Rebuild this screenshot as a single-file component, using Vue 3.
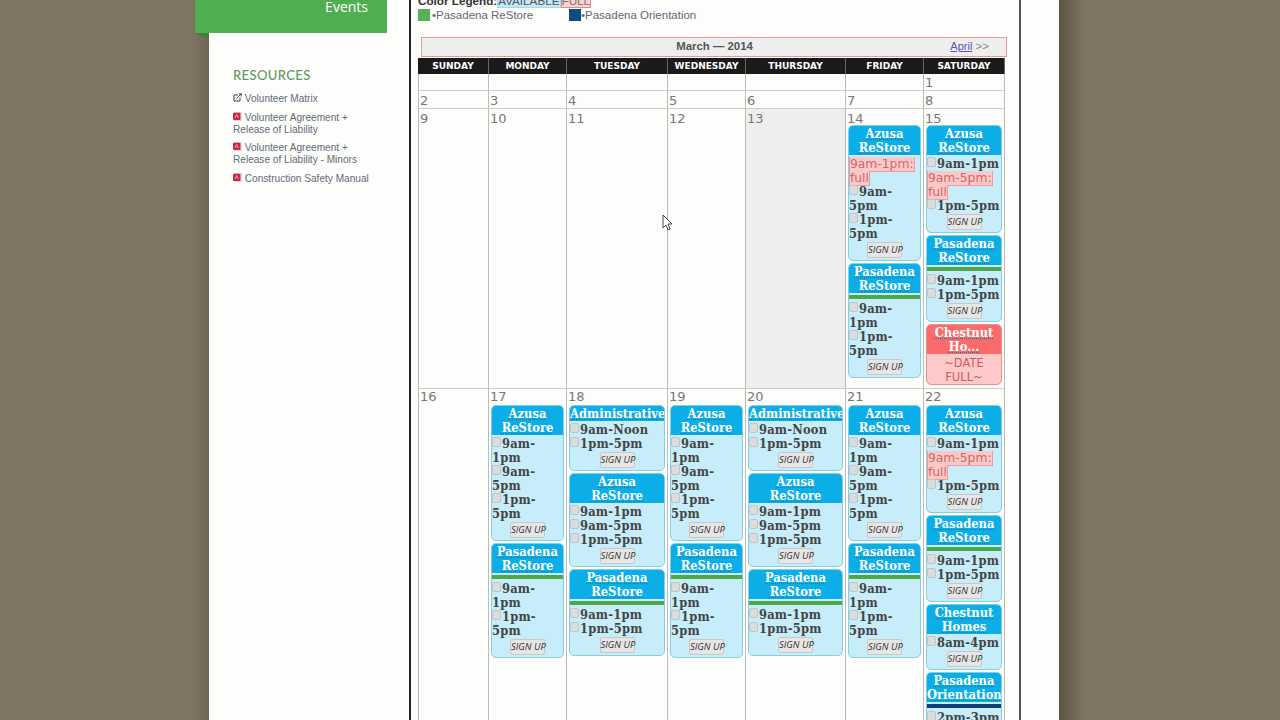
<script setup>
const links = [
  { text: 'Volunteer Matrix', icon: 'ext' },
  { text: 'Volunteer Agreement + Release of Liability', icon: 'pdf' },
  { text: 'Volunteer Agreement + Release of Liability - Minors', icon: 'pdf' },
  { text: 'Construction Safety Manual', icon: 'pdf' },
]
const days = ['SUNDAY', 'MONDAY', 'TUESDAY', 'WEDNESDAY', 'THURSDAY', 'FRIDAY', 'SATURDAY']

const t3 = ['9am-1pm', '9am-5pm', '1pm-5pm']
const t2 = ['9am-1pm', '1pm-5pm']
const azusa = { title: 'Azusa ReStore', times: t3 }
const pasadena = { title: 'Pasadena ReStore', times: t2, bar: 'green' }
const admin = { title: 'Administrative', times: ['9am-Noon', '1pm-5pm'] }
const weekday = [admin, azusa, pasadena]
const plain = [azusa, pasadena]

const rows = [
  { cls: 'short', cells: [{}, {}, {}, {}, {}, {}, { n: 1 }] },
  { cls: 'short2', cells: [{ n: 2 }, { n: 3 }, { n: 4 }, { n: 5 }, { n: 6 }, { n: 7 }, { n: 8 }] },
  {
    cls: 'tall',
    cells: [
      { n: 9 }, { n: 10 }, { n: 11 }, { n: 12 }, { n: 13, gray: true },
      {
        n: 14,
        cards: [
          { title: 'Azusa ReStore', times: [{ full: '9am-1pm: full' }, '9am-5pm', '1pm-5pm'] },
          pasadena,
        ],
      },
      {
        n: 15,
        cards: [
          { title: 'Azusa ReStore', times: ['9am-1pm', { full: '9am-5pm: full' }, '1pm-5pm'] },
          pasadena,
          { title: 'Chestnut Ho...', dateFull: true },
        ],
      },
    ],
  },
  {
    cls: 'last',
    cells: [
      { n: 16 },
      { n: 17, cards: plain },
      { n: 18, cards: weekday },
      { n: 19, cards: plain },
      { n: 20, cards: weekday },
      { n: 21, cards: plain },
      {
        n: 22,
        cards: [
          { title: 'Azusa ReStore', times: ['9am-1pm', { full: '9am-5pm: full' }, '1pm-5pm'] },
          pasadena,
          { title: 'Chestnut Homes', times: ['8am-4pm'] },
          { title: 'Pasadena Orientation', times: ['2pm-3pm'], bar: 'navy' },
        ],
      },
    ],
  },
]
</script>

<template>
  <div class="screen">
    <div class="page">
      <aside class="side">
        <div class="tab">Events</div>
        <h3 class="res">RESOURCES</h3>
        <ul class="links">
          <li v-for="l in links" :key="l.text">
            <svg v-if="l.icon === 'ext'" class="ico" viewBox="0 0 9 9" width="9" height="9">
              <path d="M5 2H1v6h6V4.5" fill="none" stroke="#444" stroke-width="1" />
              <path d="M3.5 5.5 8 1M5.5 .8H8.3V3.6" fill="none" stroke="#444" stroke-width="1" />
            </svg>
            <svg v-else class="ico" viewBox="0 0 9 9" width="9" height="9">
              <rect x="1.5" y="0.5" width="7.5" height="8" fill="#f3e4e6" stroke="#ccb" stroke-width=".6" />
              <rect x="0" y="0.7" width="7.5" height="7.3" rx="1" fill="#c8264a" />
              <path d="M2 6 3.7 2.5 5.4 6" fill="none" stroke="#f6c6d0" stroke-width=".8" />
            </svg>
            {{ l.text }}
          </li>
        </ul>
      </aside>

      <main class="main">
        <div class="legend1">
          <b>Color Legend:</b><span class="av">AVAILABLE</span><span class="fu">FULL</span>
        </div>
        <div class="legend2">
          <i class="sq green"></i><span class="lg-a">•Pasadena ReStore</span>
          <i class="sq navy"></i><span>•Pasadena Orientation</span>
        </div>

        <div class="month">
          <span class="m-title">March — 2014</span>
          <span class="m-next"><a class="m-link">April</a> &gt;&gt;</span>
        </div>

        <div class="cal">
          <div v-for="d in days" :key="d" class="dow">{{ d }}</div>
          <template v-for="(r, ri) in rows" :key="ri">
            <div
              v-for="(c, ci) in r.cells"
              :key="ci"
              class="cell"
              :class="[r.cls, { gray: c.gray, first: ci === 0 }]"
            >
              <div class="num">{{ c.n }}</div>
              <div
                v-for="(card, k) in c.cards || []"
                :key="k"
                class="card"
                :class="{ red: card.dateFull }"
              >
                <div class="head">
                  <div v-for="w in card.title.split(' ')" :key="w"><span class="ttl">{{ w }}</span></div>
                </div>
                <div v-if="card.bar" class="bar" :class="card.bar"></div>
                <div v-if="card.dateFull" class="datefull">~DATE FULL~</div>
                <template v-else>
                  <div class="times">
                    <div v-for="(t, i) in card.times" :key="i" class="time">
                      <span v-if="t.full" class="full">{{ t.full }}</span>
                      <template v-else><i class="cb"></i>{{ t }}</template>
                    </div>
                  </div>
                  <button class="sign">SIGN UP</button>
                </template>
              </div>
            </div>
          </template>
        </div>
      </main>
    </div>

    <svg class="cursor" viewBox="0 0 12 17" width="12" height="17">
      <path d="M1 1v13l3-3 2 5 2-1-2-5h4z" fill="#fff" stroke="#444" stroke-width="1" />
    </svg>
  </div>
</template>

<style>
html, body { margin: 0; padding: 0; background: #7f7564; }
</style>

<style scoped>
.screen {
  position: relative;
  width: 1280px;
  height: 720px;
  overflow: hidden;
  background: linear-gradient(90deg, #7f7564 0, #7f7564 190px, #6f6656 209px, #5c5546 1059px, #7f7564 1085px, #7f7564 100%);
}
.page {
  margin-left: 209px;
  width: 850px;
  height: 720px;
  background: #fdfdfb;
  display: flex;
  font-family: "Liberation Sans", Arial, sans-serif;
}
.side { width: 200px; flex: none; }
.tab {
  position: relative;
  margin-left: -14px;
  width: 192px;
  height: 33px;
  box-sizing: border-box;
  background: #4fae4f;
  color: #fff;
  font: 14px/14px "Open Sans", sans-serif;
  text-align: right;
  padding-right: 19px;
}
.tab::after {
  content: "";
  position: absolute;
  left: 0;
  top: 33px;
  border-top: 6px solid #3f7f3a;
  border-left: 14px solid transparent;
}
.res {
  margin: 34px 0 0 24px;
  font: 500 13px/16px Lato, sans-serif;
  letter-spacing: .4px;
  color: #5e9a5e;
}
.links {
  list-style: none;
  margin: 10px 0 0 24px;
  padding: 0;
  width: 145px;
  font-size: 10.1px;
  line-height: 12px;
  color: #5f6b78;
}
.links li { margin-bottom: 6.7px; }
.ico { vertical-align: top; margin-top: 0; }

.main {
  width: 612px;
  flex: none;
  box-sizing: border-box;
  border-left: 2px solid #222;
  border-right: 2px solid #555;
  padding-left: 7px;
  overflow: hidden;
}
.legend1 {
  margin-top: -5px;
  height: 12px;
  font-size: 11.7px;
  line-height: 12px;
  color: #333;
}
.av { background: #c5e8f7; border: 1px solid #a9d6ea; color: #555; }
.fu { background: #fbd0d0; border: 1px solid #e08a8a; color: #777; }
.legend2 {
  margin-top: 1px;
  height: 13px;
  display: flex;
  align-items: center;
  font-size: 11.5px;
  color: #667;
}
.sq { width: 12px; height: 12px; flex: none; margin-right: 2px; }
.sq.green { background: #58b158; }
.sq.navy { background: #0f4a80; margin-right: 0; }
.lg-a { width: 137px; }

.month {
  margin: 16px 0 0 3px;
  width: 586px;
  height: 20px;
  box-sizing: border-box;
  border: 1px solid #e09a9a;
  background: #eeeeee;
  position: relative;
  text-align: center;
  font-size: 11.4px;
  line-height: 16px;
  font-weight: bold;
  color: #555;
  display: flex;
  justify-content: center;
}
.m-title { margin-left: 1px; }
.m-next {
  position: absolute;
  right: 17px;
  top: 0;
  font-weight: normal;
  font-size: 11.5px;
  color: #888;
}
.m-link { color: #5a55b5; text-decoration: underline; font-size: 11px; }

.cal {
  display: grid;
  grid-template-columns: 71px 78px 101px 78px 100px 78px 81px;
  grid-template-rows: 16px 17px 18px 280px 400px;
  margin-top: 1px;
  width: 587px;
}
.dow {
  background: #1a1a1a;
  color: #fff;
  font: bold 9px/16px "DejaVu Sans", sans-serif;
  text-align: center;
  border-right: 1px solid #666;
}
.cell {
  border-right: 1px solid #bbb;
  border-bottom: 1px solid #ccc;
  padding: 0 2px;
  min-width: 0;
  box-sizing: border-box;
}
.cell.first { border-left: 1px solid #bbb; }
.cell.gray { background: #eeeeee; }
.num {
  font: 13px/16px "DejaVu Sans", sans-serif;
  color: #777;
  height: 16px;
  margin: 0 -1px;
}
.short .num { margin-top: 1px; }
.short2 .num { margin-top: 2px; }
.tall .num { line-height: 19px; }

.card {
  box-sizing: border-box;
  border: 1px solid #84cfe6;
  border-radius: 5px;
  background: #c6edf9;
  margin-bottom: 2px;
  overflow: hidden;
  font-family: "DejaVu Serif Condensed", "DejaVu Serif", serif;
  font-weight: bold;
  font-size: 12.8px;
  letter-spacing: .2px;
  line-height: 14px;
  color: #444;
}
.head {
  background: #0caee8;
  color: #fff;
  text-align: center;
  padding-top: 1px;
  letter-spacing: 0;
}
.ttl { text-decoration: underline dotted #177ea6; text-underline-offset: 1px; }
.bar { height: 4px; margin-top: 2px; }
.bar.green { background: #4ea84a; }
.bar.navy { background: #0f3f78; }
.times { margin-top: 2px; padding-right: 1px; }
.bar + .times { margin-top: 3px; }
.cb {
  display: inline-block;
  box-sizing: border-box;
  width: 9px;
  height: 10px;
  margin-right: 1px;
  background: #dcdcdc;
  border: 1px solid #bcc6cc;
  border-radius: 2px;
  vertical-align: 1px;
}
.full {
  font-family: "DejaVu Sans", sans-serif;
  font-weight: normal;
  font-size: 12.3px;
  letter-spacing: 0;
  color: #d06a6a;
  background: #fdc8c8;
  border: 1px solid #ee9a9a;
  border-width: 0 1px 1px 1px;
  -webkit-box-decoration-break: clone;
  box-decoration-break: clone;
}
.sign {
  display: block;
  box-sizing: border-box;
  margin: 1px auto 2px;
  padding: 0;
  width: 35px;
  height: 16px;
  background: #e6e6e6;
  border: 1px solid #c8c8c8;
  border-radius: 2px;
  font: italic 9.5px/14px "Open Sans", sans-serif;
  letter-spacing: 0;
  color: #333;
  white-space: nowrap;
}
.card.red { background: #fdc9c9; border-color: #ee9090; }
.card.red .head { background: #fb6b6b; }
.datefull {
  margin-top: 2px;
  text-align: center;
  font-family: "DejaVu Sans", sans-serif;
  font-weight: normal;
  font-size: 11.5px;
  letter-spacing: 0;
  color: #d05c5c;
}
.cursor {
  position: absolute;
  left: 662px;
  top: 214px;
}
</style>
